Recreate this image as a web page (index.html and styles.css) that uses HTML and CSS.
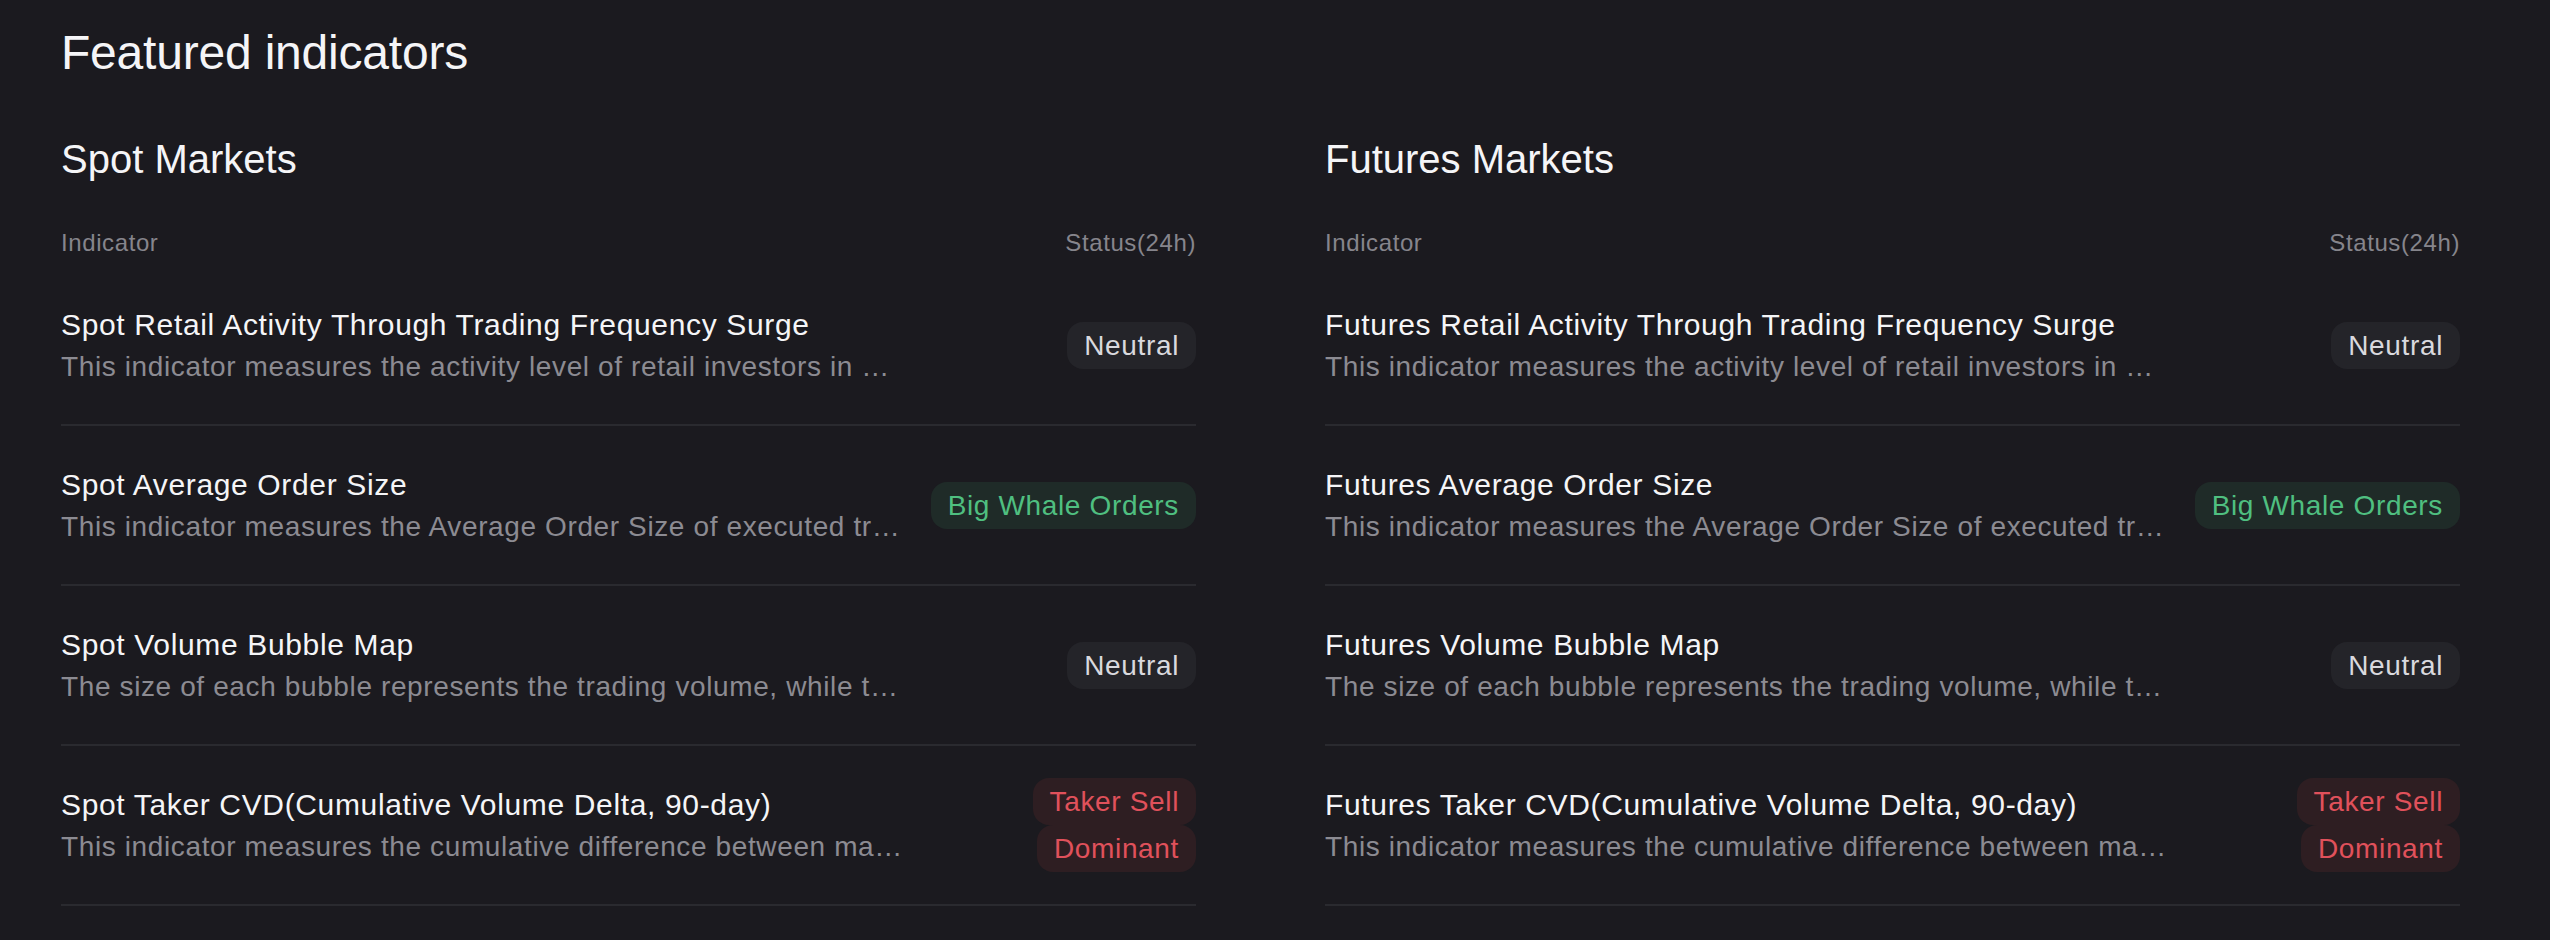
FILE: index.html
```html
<!DOCTYPE html>
<html lang="en">
    <head>
        <meta charset="UTF-8">
        <meta name="viewport" content="width=device-width, initial-scale=1.0">
        <link rel="stylesheet" href="styles.css">
        <title>Featured indicators</title>
    </head>

    <body>
    <div class="page">
        <h1 class="page-title">Featured indicators</h1>

        <div class="markets">

            <!-- spot -->
            <section class="market">
                <h2 class="market-title">Spot Markets</h2>
                <div class="table-head">
                    <span>Indicator</span>
                    <span>Status(24h)</span>
                </div>

                <div class="row">
                    <div class="info">
                        <div class="name">Spot Retail Activity Through Trading Frequency Surge</div>
                        <div class="desc">This indicator measures the activity level of retail investors in Bitcoin spot markets by tracking surges in trading frequency.</div>
                    </div>
                    <div class="status"><span class="badge neutral">Neutral</span></div>
                </div>
                <div class="row">
                    <div class="info">
                        <div class="name">Spot Average Order Size</div>
                        <div class="desc">This indicator measures the Average Order Size of executed trades in Bitcoin spot markets.</div>
                    </div>
                    <div class="status"><span class="badge bull">Big Whale Orders</span></div>
                </div>
                <div class="row">
                    <div class="info">
                        <div class="name">Spot Volume Bubble Map</div>
                        <div class="desc">The size of each bubble represents the trading volume, while the color shows how it changed.</div>
                    </div>
                    <div class="status"><span class="badge neutral">Neutral</span></div>
                </div>
                <div class="row">
                    <div class="info">
                        <div class="name">Spot Taker CVD(Cumulative Volume Delta, 90-day)</div>
                        <div class="desc">This indicator measures the cumulative difference between market buy and sell volume over 90 days.</div>
                    </div>
                    <div class="status"><span class="badge bear">Taker Sell<br>Dominant</span></div>
                </div>
            </section>

            <!-- futures -->
            <section class="market">
                <h2 class="market-title">Futures Markets</h2>
                <div class="table-head">
                    <span>Indicator</span>
                    <span>Status(24h)</span>
                </div>

                <div class="row">
                    <div class="info">
                        <div class="name">Futures Retail Activity Through Trading Frequency Surge</div>
                        <div class="desc">This indicator measures the activity level of retail investors in Bitcoin futures markets by tracking surges in trading frequency.</div>
                    </div>
                    <div class="status"><span class="badge neutral">Neutral</span></div>
                </div>
                <div class="row">
                    <div class="info">
                        <div class="name">Futures Average Order Size</div>
                        <div class="desc">This indicator measures the Average Order Size of executed trades in Bitcoin futures markets.</div>
                    </div>
                    <div class="status"><span class="badge bull">Big Whale Orders</span></div>
                </div>
                <div class="row">
                    <div class="info">
                        <div class="name">Futures Volume Bubble Map</div>
                        <div class="desc">The size of each bubble represents the trading volume, while the color shows how it changed.</div>
                    </div>
                    <div class="status"><span class="badge neutral">Neutral</span></div>
                </div>
                <div class="row">
                    <div class="info">
                        <div class="name">Futures Taker CVD(Cumulative Volume Delta, 90-day)</div>
                        <div class="desc">This indicator measures the cumulative difference between market buy and sell volume over 90 days.</div>
                    </div>
                    <div class="status"><span class="badge bear">Taker Sell<br>Dominant</span></div>
                </div>
            </section>

        </div>
    </div>
    </body>
</html>
```

FILE: styles.css
```css
* { box-sizing: border-box; }

html, body { margin: 0; }

body {
    background-color: #1b1a1f; color: #f5f5f7;
    font-family: "Liberation Sans", Arial, sans-serif;
}

.page { padding: 21px 90px 0 61px; }

.page-title {
    margin: 0 0 46px; font-size: 48px; line-height: 64px;
    font-weight: 400; letter-spacing: -0.2px;
}

.markets {
    display: grid; grid-template-columns: 1fr 1fr; column-gap: 129px;
}

.market-title {
    margin: 0 0 38px; font-size: 40px; line-height: 56px;
    font-weight: 400;
}

.table-head {
    display: flex; justify-content: space-between;
    font-size: 24px; line-height: 36px; letter-spacing: 0.6px;
    color: #86858c; padding-bottom: 5px;
}

.row {
    display: flex; align-items: center; justify-content: space-between;
    height: 160px; border-bottom: 2px solid #2a2a2f;
}

.info { min-width: 0; max-width: 842px; }

.name {
    font-size: 30px; line-height: 44px; letter-spacing: 0.65px;
    color: #f5f5f7; white-space: nowrap;
}

.desc {
    font-size: 28px; line-height: 40px; letter-spacing: 0.62px;
    color: #8c8b92;
    white-space: nowrap; overflow: hidden; text-overflow: ellipsis;
}

.status {
    text-align: right; white-space: nowrap;
    line-height: 47px; font-size: 28px;
}

.badge {
    padding: 8px 17px; border-radius: 16px; letter-spacing: 0.65px;
    -webkit-box-decoration-break: clone; box-decoration-break: clone;
}

.neutral { background: #242429; color: #d9d9de; }
.bull { background: #1f2b28; color: #4fbf80; }
.bear { background: #2e1e22; color: #e0515b; }
```
